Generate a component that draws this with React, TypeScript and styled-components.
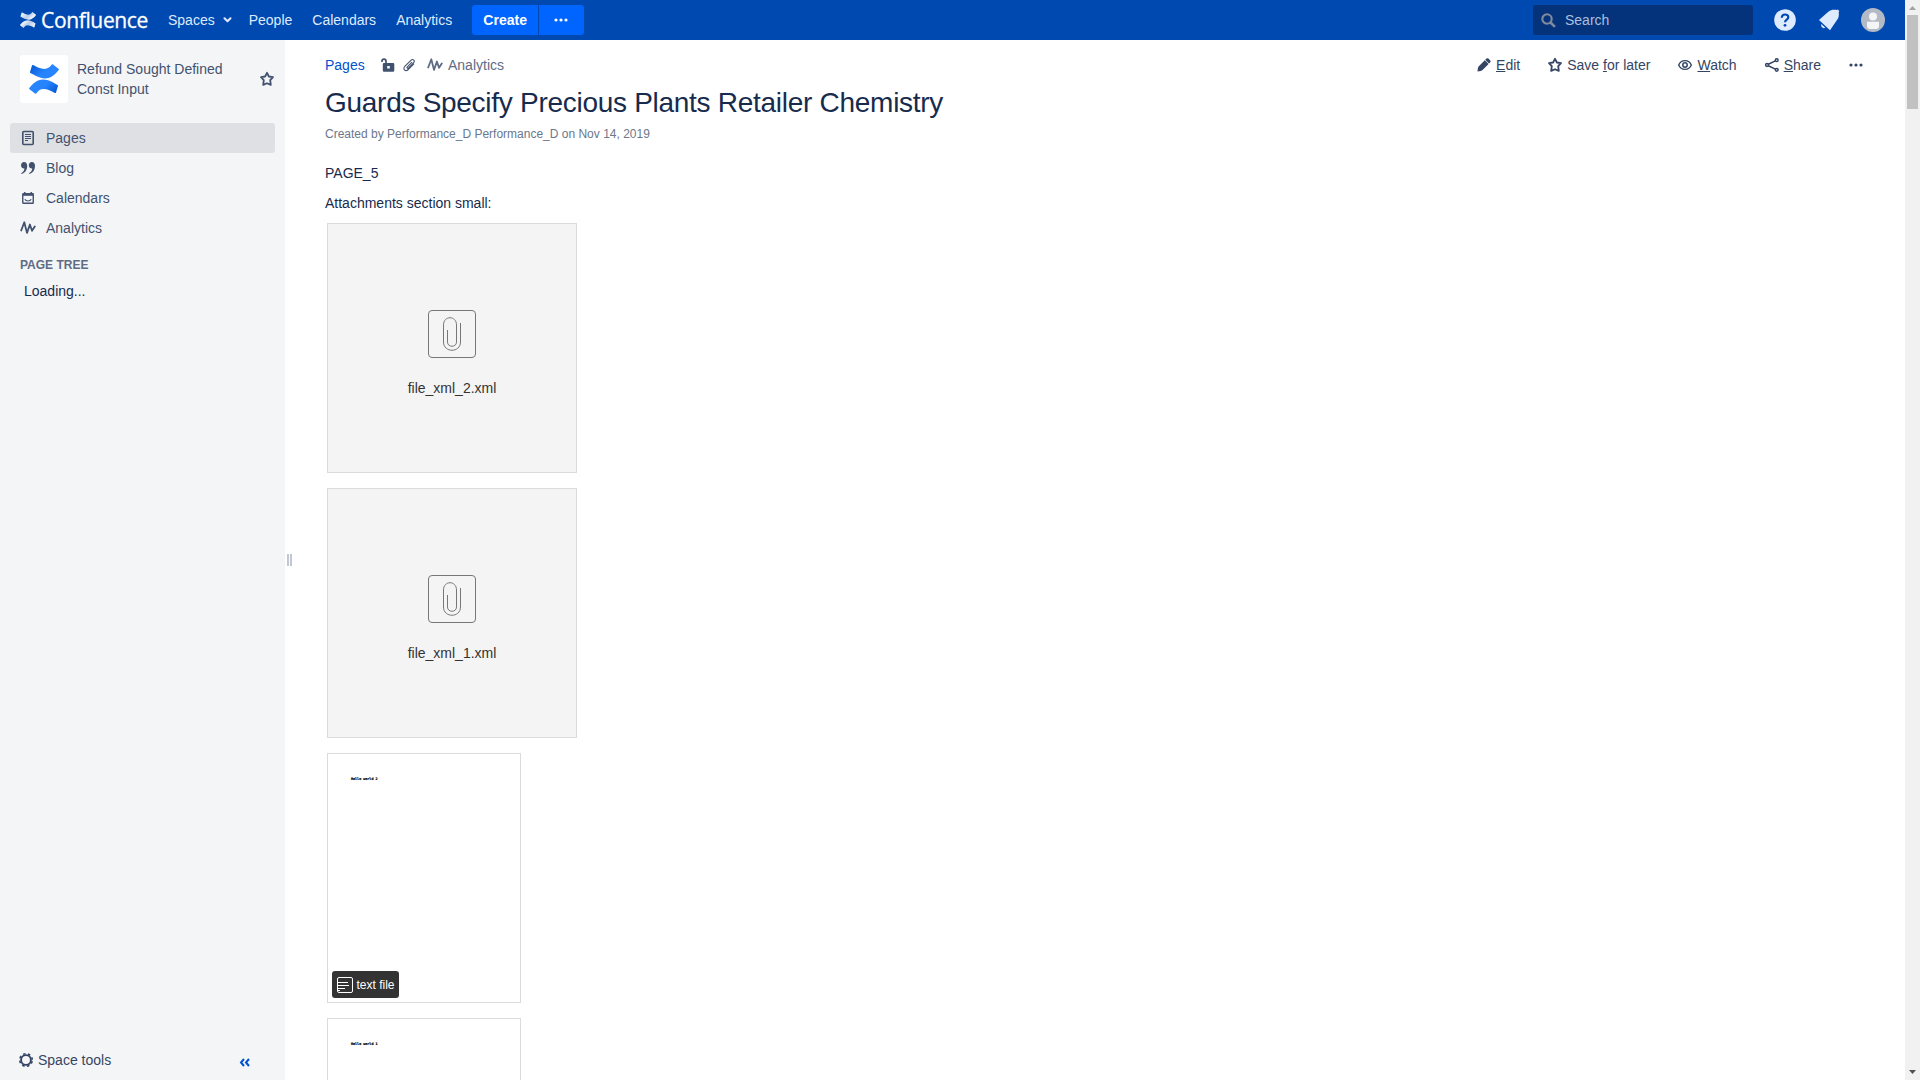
import React from 'react';
import styled, { createGlobalStyle } from 'styled-components';

const Global = createGlobalStyle`
  * { box-sizing: border-box; }
  body { margin: 0; overflow: hidden; background: #fff; color: #172b4d; font: 14px/20px "Liberation Sans", Arial, sans-serif; }
  p, h1 { margin: 0; font-weight: 400; }
  svg { display: block; flex: none; }
`;

const Screen = styled.div`display: flex; height: 1080px; width: 1920px; overflow: hidden;`;
const Page = styled.div`width: 1905px; height: 1080px; display: flex; flex-direction: column;`;

const Header = styled.header`
  height: 40px; flex: none; background: #0049b0; color: #deebff;
  display: flex; align-items: center; padding-left: 20px;
`;
const Wordmark = styled.span`
  width: 107px; margin-left: 5px; color: #fff; font: 400 21px/40px "Open Sans", "Noto Sans", sans-serif;
  letter-spacing: -0.35px; white-space: nowrap; -webkit-text-stroke: 0.3px #fff;
`;
const NavItem = styled.a<{ $gap: number }>`
  margin-left: ${p => p.$gap}px; display: flex; align-items: center; gap: 8px; white-space: nowrap;
`;
const Create = styled.button<{ $w: number; $side: 'left' | 'right' }>`
  width: ${p => p.$w}px; height: 30px; border: 0; padding: 0 ${p => (p.$side === 'right' ? 2 : 0)}px 0 0; background: #0065ff; color: #fff;
  font: bold 14px/30px "Liberation Sans", Arial, sans-serif;
  display: flex; align-items: center; justify-content: center;
  border-radius: ${p => (p.$side === 'left' ? '3px 0 0 3px' : '0 3px 3px 0')};
`;
const CreateGroup = styled.div`display: flex; gap: 1px; margin-left: 20px;`;
const Search = styled.div`
  width: 220px; height: 30px; margin-left: auto; border-radius: 3px; background: #04337b; color: #abbfdd;
  display: flex; align-items: center; padding-left: 8px; gap: 9px;
`;
const HeaderIcons = styled.div`display: flex; align-items: center; width: 152px; padding-left: 21px; gap: 21.5px;`;

const Body = styled.div`display: flex; flex: 1; min-height: 0;`;
const Sidebar = styled.aside`
  width: 285px; flex: none; background: #f4f5f7; color: #42526e; display: flex; flex-direction: column;
`;
const Space = styled.div`display: flex; align-items: center; padding: 15px 10px 0 20px; height: 63px;`;
const SpaceLogo = styled.div`
  width: 48px; height: 48px; border-radius: 3px; background: #fff; display: grid; place-items: center;
`;
const SpaceName = styled.div`width: 170px; margin: 0 11px 0 9px; flex: 1;`;
const Menu = styled.nav`padding: 20px 10px 0; display: flex; flex-direction: column;`;
const MenuItem = styled.a<{ $active?: boolean }>`
  height: 30px; display: flex; align-items: center; gap: 10px; padding-left: 10px; border-radius: 3px;
  background: ${p => (p.$active ? '#dfe0e4' : 'transparent')};
`;
const TreeTitle = styled.div`padding: 12px 20px 0; font-size: 12px; font-weight: bold; color: #5e6c84;`;
const Loading = styled.div`padding: 6px 24px 0; color: #172b4d;`;
const SidebarFoot = styled.div`
  margin-top: auto; height: 40px; padding: 0 35px 0 18px; display: flex; align-items: center; justify-content: space-between; color: #344563;
`;
const Tools = styled.div`display: flex; align-items: center; gap: 4px;`;
const Collapse = styled.div`padding-top: 4px;`;
const Splitter = styled.div`width: 10px; flex: none; display: flex; gap: 1px; padding: 514px 0 0 2px;`;
const Grip = styled.i`width: 2px; height: 12px; background: #c1c7d0;`;

const Main = styled.main`flex: 1; padding: 15px 42px 0 30px; overflow: hidden;`;
const Bar = styled.div`display: flex; align-items: center; height: 20px;`;
const Crumb = styled.a`color: #0052cc; width: 55.5px;`;
const Meta = styled.div`display: flex; align-items: center; color: #5e6c84;`;
const MetaIcon = styled.span<{ $w: number }>`width: ${p => p.$w}px;`;
const Actions = styled.div`display: flex; align-items: center; margin-left: auto; color: #344563;`;
const Action = styled.a<{ $gap: number; $inner: number }>`
  display: flex; align-items: center; gap: ${p => p.$inner}px; margin-left: ${p => p.$gap}px; white-space: pre;
`;
const Title = styled.h1`padding-top: 12px; font-size: 28px; line-height: 32px; letter-spacing: -0.28px;`;
const Byline = styled.p`padding-top: 5px; font-size: 12px; line-height: 20px; color: #6b778c; height: 39px;`;
const Para = styled.p`height: 30px; padding-top: 5px;`;
const Files = styled.div`display: flex; flex-direction: column; align-items: flex-start; gap: 15px; padding: 5px 0 0 2px;`;
const Card = styled.div`
  width: 250px; height: 250px; flex: none; border: 1px solid #dadbdc; background: #f4f4f4; color: #333;
  display: flex; flex-direction: column; align-items: center; padding-top: 86px;
`;
const FileName = styled.span`margin-top: 20px;`;
const Preview = styled.div`
  width: 194px; height: 250px; flex: none; border: 1px solid #dadbdc; background: #fff;
  display: flex; flex-direction: column; justify-content: space-between; padding: 22px 4px 4px;
`;
const Tiny = styled.span`padding-left: 19px; color: #000; font: bold 3.4px/6px "DejaVu Sans Mono", monospace; white-space: pre; -webkit-text-stroke: 0.2px #000;`;
const Badge = styled.div`
  width: 67px; height: 27px; border-radius: 3px; background: #333; color: #fff; font-size: 12px;
  display: flex; align-items: center; padding-left: 5px; gap: 3.5px; white-space: nowrap;
`;

const Scroll = styled.div`
  width: 15px; height: 1080px; background: #f1f1f1; display: flex; flex-direction: column; align-items: center;
`;
const Thumb = styled.div`width: 11px; height: 94px; background: #c1c1c1;`;
const ScrollEnd = styled.div<{ $bottom?: boolean }>`
  height: 15px; padding-top: ${p => (p.$bottom ? 5 : 6)}px; margin-top: ${p => (p.$bottom ? 'auto' : 0)};
`;

const Logo = ({ size, white }: { size: number; white?: boolean }) => {
  const id = white ? 'w' : 'b';
  const dark = white ? '#fff' : '#0052cc';
  const mid = white ? '#b9cdea' : '#2684ff';
  const light = white ? '#fff' : '#2684ff';
  return (
    <svg width={size} height={size} viewBox="0 0 30 30">
      <defs>
        <linearGradient id={id + '1'} x1="0" y1="0" x2="1" y2="0.5"><stop offset="0" stopColor={dark} /><stop offset=".6" stopColor={mid} /><stop offset="1" stopColor={light} /></linearGradient>
        <linearGradient id={id + '2'} x1="1" y1="1" x2="0" y2="0.5"><stop offset="0" stopColor={dark} /><stop offset=".6" stopColor={mid} /><stop offset="1" stopColor={light} /></linearGradient>
      </defs>
      <path fill={`url(#${id}1)`} d="M4.200 1.100C3.700.8 3.200 1 3 1.500L1 7.900C.8 8.400 1 8.900 1.500 9.100C6 11.500 10.500 14.400 15.800 14.400C22 14.400 26.500 10 29.700 5.900C30 5.400 30 5.100 29.500 4.700L24 .4C23.500 0 23.200.1 22.800.6C20.500 3.500 18.500 5 15.500 5C11.500 5 7.800 3 4.200 1.100Z" />
      <path fill={`url(#${id}2)`} d="M25.800 28.900C26.300 29.200 26.800 29 27 28.500L29 22.100C29.200 21.600 29 21.100 28.500 20.900C24 18.500 19.500 15.600 14.200 15.600C8 15.600 3.500 20 .3 24.100C0 24.600 0 24.900.5 25.300L6 29.600C6.500 30 6.800 29.900 7.200 29.400C9.500 26.500 11.500 25 14.500 25C18.500 25 22.200 27 25.800 28.900Z" />
    </svg>
  );
};
const Chevron = () => <svg width="9" height="6" viewBox="0 0 9 6"><path d="M1.500 1.200 4.500 4.200 7.500 1.200" fill="none" stroke="currentColor" strokeWidth="2" strokeLinecap="round" strokeLinejoin="round" /></svg>;
const Dots = () => <svg width="14" height="4" viewBox="0 0 14 4" fill="currentColor"><circle cx="2" cy="2" r="1.600" /><circle cx="7" cy="2" r="1.600" /><circle cx="12" cy="2" r="1.600" /></svg>;
const Star = () => <svg width="16" height="16" viewBox="0 0 16 16"><path d="M8 1.800 9.900 5.500 14 6.200 11.200 9.200 11.800 13.900 8 12.200 4.200 13.900 4.800 9.200 2 6.200 6.100 5.500Z" fill="none" stroke="currentColor" strokeWidth="1.800" strokeLinejoin="round" /></svg>;
const Pulse = () => <svg width="16" height="16" viewBox="0 0 16 16"><path d="M1.200 10.500 4.300 2.300 7 12.900 9.900 4.500 12 10.800 14.800 6.500" fill="none" stroke="currentColor" strokeWidth="1.800" strokeLinecap="round" strokeLinejoin="round" /></svg>;
const PageIcon = () => <svg width="16" height="16" viewBox="0 0 16 16"><rect x="2.800" y="1.500" width="10.400" height="13" rx="1" fill="none" stroke="currentColor" strokeWidth="1.600" /><path d="M5 4.500H11M5 6.500H11M5 8.500H11M5 10.500H8" stroke="currentColor" strokeWidth="1" /></svg>;
const Quote = () => <svg width="16" height="16" viewBox="0 0 16 16" fill="currentColor"><path d="M4 2C6 2 7.200 3.500 7.200 5.700C7.200 9.500 5.400 13 1.500 14L1.200 13.300C3.200 12.200 4.300 10.500 4.400 8.500C2.500 8.600 1 7.300 1 5.200C1 3.300 2.300 2 4 2Z" /><path d="M11.800 2C13.800 2 15 3.500 15 5.700C15 9.500 13.200 13 9.300 14L9 13.300C11 12.200 12.100 10.500 12.200 8.500C10.300 8.600 8.800 7.300 8.800 5.200C8.800 3.300 10.100 2 11.800 2Z" /></svg>;
const Cal = () => <svg width="16" height="16" viewBox="0 0 16 16" fill="none" stroke="currentColor"><rect x="2.750" y="3.750" width="10.500" height="9.500" rx=".6" strokeWidth="1.400" /><path d="M2.500 4.700H13.500" strokeWidth="2.200" /><path d="M4.700 2V4M11.300 2V4" strokeWidth="1.500" /><path d="M4.800 9.200C6 11.500 10 11.500 11.200 9.200" strokeWidth="1.100" /></svg>;
const Gear = () => <svg width="16" height="16" viewBox="0 0 16 16" fill="none" stroke="currentColor"><circle cx="8" cy="8" r="4.900" strokeWidth="1.900" /><circle cx="8" cy="8" r="6.300" strokeWidth="1.500" strokeDasharray="2.500 2.448" strokeDashoffset="-1.200" /></svg>;
const DoubleLeft = () => <svg width="11" height="9" viewBox="0 0 11 9" fill="none" stroke="#0052cc" strokeWidth="2"><path d="M5 1 2 4.500 5 8M10 1 7 4.500 10 8" /></svg>;
const Magnifier = () => <svg width="15" height="15" viewBox="0 0 15 15" fill="none" stroke="#808b9e" strokeWidth="2.100"><circle cx="6" cy="6" r="4.700" /><path d="M9.500 9.500 13.200 13.200" strokeWidth="2.500" strokeLinecap="round" /></svg>;
const Help = () => <svg width="22" height="22" viewBox="0 0 22 22"><circle cx="11" cy="11" r="10.800" fill="#deebff" /><path d="M7.800 8.700C7.800 4.500 14.300 4.500 14.300 8.300C14.300 10.700 11 10.600 11 13.300" fill="none" stroke="#0049b0" strokeWidth="2.200" /><circle cx="11" cy="16.300" r="1.400" fill="#0049b0" /></svg>;
const Bell = () => <svg width="22" height="22" viewBox="0 0 22 22" fill="#deebff"><path d="M1 11 10 3C12.500.8 15.500.6 18.700 1L19.700.5 21.300 2 20.700 3C21.200 6.500 20.700 9 19 11L12 21.300Z" /><path d="M3.300 15 7.300 18.700C5 20.200 2.500 17.800 3.300 15Z" /></svg>;
const Avatar = () => <svg width="24" height="24" viewBox="0 0 24 24"><circle cx="12" cy="12" r="12" fill="#b3bac5" /><circle cx="12" cy="8.500" r="4" fill="#f4f5f7" /><path d="M6 13.700H18V18C18 20 17 21 15 21H9C7 21 6 20 6 18Z" fill="#f4f5f7" /></svg>;
const Lock = () => <svg width="14" height="14" viewBox="0 0 14 14"><path d="M1 4V3.200C1 .4 5 .4 5 3.200V6" fill="none" stroke="#42526e" strokeWidth="1.700" /><path d="M3 5H12Q13.300 5 13.300 6.300V12.400Q13.300 13.700 12 13.700H3Q1.800 13.700 1.800 12.400V6.300Q1.800 5 3 5ZM6.200 8V10.500H8.800V8Z" fill="#42526e" fillRule="evenodd" /></svg>;
const Clip = () => <svg width="14" height="14" viewBox="0 0 14 14"><path d="M9.800 4.300 5.400 8.800C4.500 9.800 5.600 10.900 6.600 9.900L11.500 5C13.500 2.800 11 .3 8.900 2.300L3 8.200C.2 11 3.500 14.100 6.200 11.500L11.600 6.200" fill="none" stroke="#42526e" strokeWidth="1.100" strokeLinecap="round" /></svg>;
const Pencil = () => <svg width="16" height="16" viewBox="0 0 16 16" fill="currentColor"><path d="M2.500 9.500 8.800 3.200 12.600 7 6.300 13.300Q5.500 14 1.500 14.500 1.800 10.400 2.500 9.500ZM9.200 2.800 10.500 1.500Q11.500.8 12.400 1.500L14.300 3.400Q15 4.300 14.300 5.300L13 6.600Z" /></svg>;
const Eye = () => <svg width="16" height="16" viewBox="0 0 16 16" fill="none" stroke="currentColor"><path d="M1.700 8C4 2.200 12 2.200 14.300 8C12 13.800 4 13.800 1.700 8Z" strokeWidth="1.400" /><circle cx="8" cy="8" r="2.200" strokeWidth="1.500" /></svg>;
const Share = () => <svg width="16" height="16" viewBox="0 0 16 16" fill="none" stroke="currentColor" strokeWidth="1.500"><circle cx="3" cy="8" r="1.400" /><circle cx="12.700" cy="3.200" r="1.400" /><circle cx="12.700" cy="12.800" r="1.400" /><path d="M4.300 7.300 11.400 3.900M4.300 8.700 11.400 12.100" strokeWidth="1.600" /></svg>;
const FileIcon = () => <svg width="48" height="48" viewBox="0 0 48 48" fill="none" stroke="#777"><rect x=".5" y=".5" width="47" height="47" rx="3.500" /><path d="M19.500 20V32C19.500 37.700 28.500 37.700 28.500 32V15C28.500 5.300 15.500 5.300 15.500 15V32C15.500 43 32.500 43 32.500 32V13" /></svg>;
const TextIcon = () => <svg width="16" height="16" viewBox="0 0 16 16" fill="none" stroke="#fff"><rect x=".5" y=".5" width="15" height="15" rx="1.500" /><path d="M1 5.500H11M1 8.500H12M1 11.500H8M1 13.500H3" /></svg>;

const attachments = ['file_xml_2.xml', 'file_xml_1.xml'];

export default function App() {
  return (
    <Screen>
      <Global />
      <Page>
        <Header>
          <Logo size={16} white />
          <Wordmark>Confluence</Wordmark>
          <NavItem $gap={20}>Spaces <Chevron /></NavItem>
          <NavItem $gap={17}>People</NavItem>
          <NavItem $gap={20}>Calendars</NavItem>
          <NavItem $gap={20}>Analytics</NavItem>
          <CreateGroup>
            <Create $w={66} $side="left">Create</Create>
            <Create $w={45} $side="right"><Dots /></Create>
          </CreateGroup>
          <Search><Magnifier />Search</Search>
          <HeaderIcons><Help /><Bell /><Avatar /></HeaderIcons>
        </Header>
        <Body>
          <Sidebar>
            <Space>
              <SpaceLogo><Logo size={30} /></SpaceLogo>
              <SpaceName>Refund Sought Defined Const Input</SpaceName>
              <Star />
            </Space>
            <Menu>
              <MenuItem $active><PageIcon />Pages</MenuItem>
              <MenuItem><Quote />Blog</MenuItem>
              <MenuItem><Cal />Calendars</MenuItem>
              <MenuItem><Pulse />Analytics</MenuItem>
            </Menu>
            <TreeTitle>PAGE TREE</TreeTitle>
            <Loading>Loading...</Loading>
            <SidebarFoot>
              <Tools><Gear />Space tools</Tools>
              <Collapse><DoubleLeft /></Collapse>
            </SidebarFoot>
          </Sidebar>
          <Splitter><Grip /><Grip /></Splitter>
          <Main>
            <Bar>
              <Crumb>Pages</Crumb>
              <Meta>
                <MetaIcon $w={21.5}><Lock /></MetaIcon>
                <MetaIcon $w={25}><Clip /></MetaIcon>
                <MetaIcon $w={21}><Pulse /></MetaIcon>
                Analytics
              </Meta>
              <Actions>
                <Action $gap={0} $inner={4}><Pencil /><span><u>E</u>dit</span></Action>
                <Action $gap={27} $inner={4}><Star /><span>Save <u>f</u>or later</span></Action>
                <Action $gap={27} $inner={4}><Eye /><span><u>W</u>atch</span></Action>
                <Action $gap={27} $inner={4}><Share /><span><u>S</u>hare</span></Action>
                <Action $gap={28} $inner={0}><Dots /></Action>
              </Actions>
            </Bar>
            <Title>Guards Specify Precious Plants Retailer Chemistry</Title>
            <Byline>Created by Performance_D Performance_D on Nov 14, 2019</Byline>
            <Para>PAGE_5</Para>
            <Para>Attachments section small:</Para>
            <Files>
              {attachments.map(name => (
                <Card key={name}><FileIcon /><FileName>{name}</FileName></Card>
              ))}
              <Preview>
                <Tiny>Hello world 2</Tiny>
                <Badge><TextIcon />text file</Badge>
              </Preview>
              <Preview><Tiny>Hello world 1</Tiny></Preview>
            </Files>
          </Main>
        </Body>
      </Page>
      <Scroll>
        <ScrollEnd><svg width="7" height="4" viewBox="0 0 7 4"><path d="M0 4 3.500 0 7 4Z" fill="#a3a3a3" /></svg></ScrollEnd>
        <Thumb />
        <ScrollEnd $bottom><svg width="7" height="4" viewBox="0 0 7 4"><path d="M0 0 3.500 4 7 0Z" fill="#505050" /></svg></ScrollEnd>
      </Scroll>
    </Screen>
  );
}
